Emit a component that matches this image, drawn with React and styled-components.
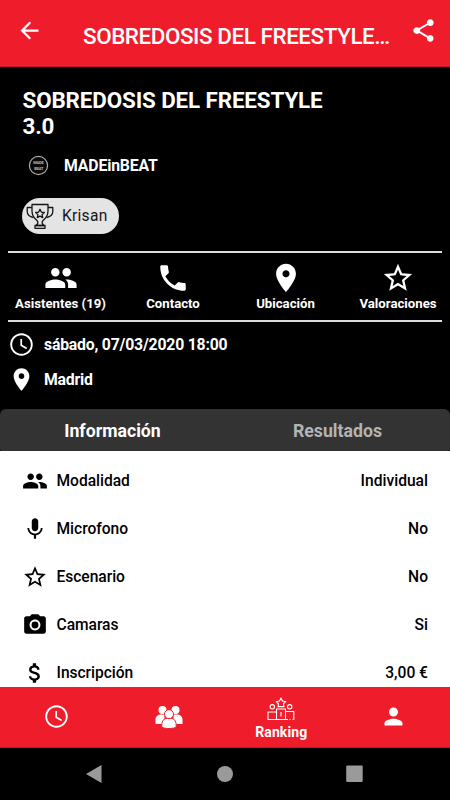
import React from "react";
import styled, { createGlobalStyle } from "styled-components";

const GlobalStyle = createGlobalStyle`
  * { box-sizing: border-box; }
  html, body { margin: 0; padding: 0; background: #000; }
  body { font-family: Roboto, "Liberation Sans", sans-serif; overflow: hidden; }
`;

const Screen = styled.div`
  width: 450px;
  height: 800px;
  display: flex;
  flex-direction: column;
  background: #000;
  color: #fff;
  overflow: hidden;
`;

const Header = styled.header`
  flex: none;
  height: 67px;
  display: flex;
  background: #ef1c2c;
  border-bottom: 1px solid #c81724;
  padding: 17px 13px 0 16px;
`;

const HeaderTitle = styled.h1`
  margin: 4.5px 0 0 40px;
  width: 318px;
  font-size: 22.4px;
  line-height: 28px;
  font-weight: 500;
  letter-spacing: -0.42px;
  white-space: nowrap;
`;

const HeaderShare = styled.div`
  margin-left: auto;
`;

const Glyph = styled.svg`
  display: block;
  flex: none;
  width: ${(p) => p.$size}px;
  height: ${(p) => p.$size}px;
  fill: currentColor;
`;

const Intro = styled.section`
  flex: none;
  height: 184px;
  padding: 20px 22px 0;
`;

const EventTitle = styled.h2`
  margin: 0 0 0 0.5px;
  width: 330px;
  font-size: 22.4px;
  line-height: 26px;
  font-weight: 700;
  letter-spacing: -0.13px;
`;

const Organizer = styled.div`
  display: flex;
  align-items: center;
  height: 27px;
  margin-top: 13px;
  padding-left: 6px;
  gap: 15px;
  font-size: 15.8px;
  font-weight: 700;
  letter-spacing: -0.15px;
`;

const Seal = styled.svg`
  display: block;
  width: 21px;
  height: 21px;
`;

const Chip = styled.div`
  display: flex;
  align-items: center;
  width: 97px;
  height: 36px;
  margin-top: 19px;
  padding-left: 4px;
  gap: 8px;
  border-radius: 18px;
  background: #e4e4e4;
  color: #161616;
  font-size: 15.6px;
  letter-spacing: 0.25px;
`;

const Trophy = styled.svg`
  display: block;
  width: 28px;
  height: 28px;
`;

const Actions = styled.nav`
  flex: none;
  display: grid;
  grid-template-columns: 105px 120px 105px 120px;
  height: 71px;
  margin: 0 8px;
  border-top: 2px solid #dcdcdc;
  border-bottom: 2px solid #dcdcdc;
`;

const Action = styled.div`
  display: flex;
  flex-direction: column;
  align-items: center;
  padding-top: 8px;
  font-size: 13.2px;
  line-height: 18px;
  font-weight: 700;
  white-space: nowrap;
`;

const Details = styled.section`
  flex: none;
  height: 87px;
  padding: 4.5px 8px 0;
`;

const Detail = styled.div`
  display: flex;
  align-items: center;
  height: 35px;
  gap: 9px;
  font-size: 15.8px;
  font-weight: 700;
  letter-spacing: -0.21px;
`;

const TabBar = styled.div`
  flex: none;
  display: grid;
  grid-template-columns: 1fr 1fr;
  height: 41.5px;
  background: #333;
  border-radius: 6px 6px 2px 2px;
`;

const Tab = styled.div`
  display: flex;
  align-items: center;
  justify-content: center;
  padding-top: 2px;
  font-size: 17.7px;
  font-weight: 700;
  color: ${(p) => (p.$active ? "#fff" : "#b3b3b3")};
`;

const InfoList = styled.section`
  flex: none;
  height: 236px;
  overflow: hidden;
  padding: 6px 22px 0;
  background: #fff;
  color: #000;
`;

const InfoRow = styled.div`
  display: flex;
  align-items: center;
  height: 48px;
  font-size: 15.6px;
  font-weight: 500;
`;

const InfoLabel = styled.span`
  margin-left: 8.5px;
  letter-spacing: -0.04px;
`;

const InfoValue = styled.span`
  margin-left: auto;
`;

const BottomTabs = styled.nav`
  flex: none;
  display: grid;
  grid-template-columns: repeat(4, 1fr);
  height: 61.5px;
  background: #ef1c2c;
  border-bottom: 1px solid #c81724;
`;

const BottomTab = styled.div`
  display: flex;
  flex-direction: column;
  align-items: center;
  justify-content: center;
  padding-top: ${(p) => (p.$labelled ? "4px" : "0")};
  font-size: 14px;
  line-height: 18px;
  font-weight: 700;
  letter-spacing: 0.1px;
`;

const RankingArt = styled.svg`
  display: block;
  width: 28px;
  height: 24px;
  margin-bottom: 2px;
`;

const CrowdArt = styled.svg`
  display: block;
  width: 28px;
  height: 24px;
`;

const SystemBar = styled.footer`
  flex: 1;
  background: #000;
`;

const SystemArt = styled.svg`
  display: block;
  width: 450px;
  height: 52px;
  fill: #9a9a9a;
`;

const PATHS = {
  back: "M20 11H7.83l5.59-5.59L12 4l-8 8 8 8 1.41-1.41L7.83 13H20v-2z",
  share:
    "M18 16.08c-.76 0-1.44.3-1.96.77L8.91 12.7c.05-.23.09-.46.09-.7s-.04-.47-.09-.7l7.05-4.11c.54.5 1.25.81 2.04.81 1.66 0 3-1.34 3-3s-1.34-3-3-3-3 1.34-3 3c0 .24.04.47.09.7L8.04 9.81C7.5 9.31 6.79 9 6 9c-1.66 0-3 1.34-3 3s1.34 3 3 3c.79 0 1.5-.31 2.04-.81l7.12 4.16c-.05.21-.08.43-.08.65 0 1.61 1.31 2.92 2.92 2.92s2.92-1.31 2.92-2.92-1.31-2.92-2.92-2.92z",
  group:
    "M16 11c1.66 0 2.99-1.34 2.99-3S17.66 5 16 5s-3 1.34-3 3 1.34 3 3 3zm-8 0c1.66 0 2.99-1.34 2.99-3S9.66 5 8 5 5 6.34 5 8s1.34 3 3 3zm0 2c-2.33 0-7 1.17-7 3.5V19h14v-2.5c0-2.33-4.67-3.5-7-3.5zm8 0c-.29 0-.62.02-.97.05 1.16.84 1.97 1.97 1.97 3.45V19h6v-2.5c0-2.33-4.67-3.5-7-3.5z",
  call: "M6.62 10.79c1.44 2.83 3.76 5.14 6.59 6.59l2.2-2.2c.27-.27.67-.36 1.02-.24 1.12.37 2.33.57 3.57.57.55 0 1 .45 1 1V20c0 .55-.45 1-1 1-9.39 0-17-7.61-17-17 0-.55.45-1 1-1h3.5c.55 0 1 .45 1 1 0 1.25.2 2.45.57 3.57.11.35.03.74-.25 1.02l-2.2 2.2z",
  place:
    "M12 2C8.13 2 5 5.13 5 9c0 5.25 7 13 7 13s7-7.75 7-13c0-3.87-3.13-7-7-7zm0 9.5c-1.38 0-2.5-1.12-2.5-2.5s1.12-2.5 2.5-2.5 2.5 1.12 2.5 2.5-1.12 2.5-2.5 2.5z",
  star: "M22 9.24l-7.19-.62L12 2 9.19 8.63 2 9.24l5.46 4.73L5.82 21 12 17.27 18.18 21l-1.63-7.03L22 9.24zM12 15.4l-3.76 2.27 1-4.28-3.32-2.88 4.38-.38L12 6.1l1.71 4.04 4.38.38-3.32 2.88 1 4.28L12 15.4z",
  clock:
    "M11.99 2C6.47 2 2 6.48 2 12s4.47 10 9.99 10C17.52 22 22 17.52 22 12S17.52 2 11.99 2zM12 20.300c-4.600 0-8.300-3.700-8.300-8.300s3.700-8.300 8.300-8.300 8.300 3.700 8.300 8.300-3.700 8.300-8.300 8.300zm.5-13.300H11v6l5.25 3.15.75-1.23-4.5-2.67z",
  mic: "M12 14c1.66 0 2.99-1.34 2.99-3L15 5c0-1.66-1.34-3-3-3S9 3.34 9 5v6c0 1.66 1.34 3 3 3zm5.3-3c0 3-2.54 5.1-5.3 5.1S6.7 14 6.7 11H5c0 3.41 2.72 6.23 6 6.72V21h2v-3.28c3.28-.48 6-3.3 6-6.72h-1.7z",
  camera:
    "M12 8.8a3.2 3.2 0 1 0 0 6.4 3.2 3.2 0 0 0 0-6.4zM9 2L7.17 4H4c-1.1 0-2 .9-2 2v12c0 1.1.9 2 2 2h16c1.1 0 2-.9 2-2V6c0-1.1-.9-2-2-2h-3.17L15 2H9zm3 15c-2.76 0-5-2.24-5-5s2.24-5 5-5 5 2.24 5 5-2.24 5-5 5z",
  money:
    "M11.8 10.9c-2.27-.59-3-1.2-3-2.15 0-1.09 1.01-1.85 2.7-1.85 1.78 0 2.44.85 2.5 2.1h2.21c-.07-1.72-1.12-3.3-3.21-3.81V3h-3v2.16c-1.94.42-3.5 1.68-3.5 3.61 0 2.31 1.91 3.46 4.7 4.13 2.5.6 3 1.48 3 2.41 0 .69-.49 1.79-2.7 1.79-2.06 0-2.87-.92-2.98-2.1h-2.2c.12 2.19 1.76 3.42 3.68 3.83V21h3v-2.15c1.95-.37 3.5-1.5 3.5-3.55 0-2.84-2.43-3.81-4.7-4.4z",
  person:
    "M12 12c2.21 0 4-1.79 4-4s-1.79-4-4-4-4 1.79-4 4 1.79 4 4 4zm0 2c-2.67 0-8 1.34-8 4v2h16v-2c0-2.66-5.33-4-8-4z",
};

function Icon({ name, size }) {
  return (
    <Glyph viewBox="0 0 24 24" $size={size} aria-hidden="true">
      <path d={PATHS[name]} />
    </Glyph>
  );
}

function SealArt() {
  return (
    <Seal viewBox="0 0 21 21">
      <circle cx="10.5" cy="10.5" r="9.1" fill="#080808" stroke="#aaa" strokeWidth="1.2" />
      <g fill="#bbb" fontFamily="Roboto, sans-serif" fontSize="4" fontWeight="700" textAnchor="middle" letterSpacing="-0.2">
        <text x="10.3" y="8.8">MADE</text>
        <text x="10.8" y="15.400">BEAT</text>
      </g>
    </Seal>
  );
}

function TrophyArt() {
  return (
    <Trophy viewBox="0 0 28 28" fill="none" stroke="#161616" strokeWidth="1.3" strokeLinejoin="round">
      <path d="M6 2.5H22V9C22 14 19.5 16.5 17 18.5C15.5 20 16 22 18 23.5H10C12 22 12.5 20 11 18.5C8.500 16.500 6 14 6 9Z" />
      <path d="M9 26.300V23.500H19V26.300ZM6 5.500H1.200V9.500C1.200 12 3 14.500 7.500 15.500M22 5.500H26.800V9.500C26.800 12 25 14.500 20.500 15.500" />
      <path d="M14 7.300L15.300 10.100L18.300 10.500L16.100 12.600L16.700 15.600L14 14.100L11.300 15.600L11.900 12.600L9.700 10.500L12.700 10.100Z" />
    </Trophy>
  );
}

function Crowd() {
  return (
    <CrowdArt viewBox="0 0 28 24" fill="#fff">
      <circle cx="7.500" cy="5" r="4" />
      <circle cx="20.500" cy="5" r="4" />
      <path d="M.5 19V14.500C.5 11.500 3 9.500 6 9.500H9.500V19ZM27.500 19V14.500C27.500 11.500 25 9.500 22 9.500H18.500V19Z" />
      <g stroke="#ef1c2c" strokeWidth="1">
        <path d="M6.800 20.500C6.800 15.500 9 13.500 12 13.500H16C19 13.500 21.200 15.500 21.200 20.500V22C19 24 9 24 6.800 22Z" />
        <circle cx="14" cy="9.200" r="4.500" />
      </g>
    </CrowdArt>
  );
}

function Podium() {
  return (
    <RankingArt viewBox="0 0 28 24" fill="none" stroke="#fff" strokeWidth="1.100">
      <path d="M9.500 22.500H1V15H9.500M9.500 22.500V12H18.500V22.500H9.500M18.500 14.500H26.800V23M18.500 22.500H21M22.500 22.500H23.500M25 22.500H25.500M14 15V19.500" />
      <path d="M14 1.200L15.500 4L18.600 4.600L16.500 6.800L16.900 9.600H11.100L11.500 6.800L9.400 4.600L12.500 4Z" />
      <circle cx="5.300" cy="9.800" r="2.200" />
      <circle cx="22.700" cy="9.800" r="2.200" />
    </RankingArt>
  );
}

const actions = [
  ["group", "Asistentes (19)"],
  ["call", "Contacto"],
  ["place", "Ubicación"],
  ["star", "Valoraciones"],
];

const rows = [
  ["group", "Modalidad", "Individual"],
  ["mic", "Microfono", "No"],
  ["star", "Escenario", "No"],
  ["camera", "Camaras", "Si"],
  ["money", "Inscripción", "3,00 €"],
];

export default function App() {
  return (
    <>
      <GlobalStyle />
      <Screen>
        <Header>
          <Icon name="back" size={27} />
          <HeaderTitle>SOBREDOSIS DEL FREESTYLE…</HeaderTitle>
          <HeaderShare>
            <Icon name="share" size={27} />
          </HeaderShare>
        </Header>
        <Intro>
          <EventTitle>SOBREDOSIS DEL FREESTYLE 3.0</EventTitle>
          <Organizer>
            <SealArt />
            MADEinBEAT
          </Organizer>
          <Chip>
            <TrophyArt />
            Krisan
          </Chip>
        </Intro>
        <Actions>
          {actions.map(([icon, label]) => (
            <Action key={label}>
              <Icon name={icon} size={34} />
              {label}
            </Action>
          ))}
        </Actions>
        <Details>
          <Detail>
            <Icon name="clock" size={27} />
            sábado, 07/03/2020 18:00
          </Detail>
          <Detail>
            <Icon name="place" size={27} />
            Madrid
          </Detail>
        </Details>
        <TabBar>
          <Tab $active>Información</Tab>
          <Tab>Resultados</Tab>
        </TabBar>
        <InfoList>
          {rows.map(([icon, label, value]) => (
            <InfoRow key={label}>
              <Icon name={icon} size={26} />
              <InfoLabel>{label}</InfoLabel>
              <InfoValue>{value}</InfoValue>
            </InfoRow>
          ))}
        </InfoList>
        <BottomTabs>
          <BottomTab>
            <Icon name="clock" size={27} />
          </BottomTab>
          <BottomTab>
            <Crowd />
          </BottomTab>
          <BottomTab $labelled>
            <Podium />
            Ranking
          </BottomTab>
          <BottomTab>
            <Icon name="person" size={27} />
          </BottomTab>
        </BottomTabs>
        <SystemBar>
          <SystemArt viewBox="0 0 450 52">
            <path d="M86 26L101.500 17V35Z" />
            <circle cx="225" cy="26" r="8" />
            <rect x="346.200" y="17.500" width="16.500" height="16.500" rx="1" />
          </SystemArt>
        </SystemBar>
      </Screen>
    </>
  );
}
